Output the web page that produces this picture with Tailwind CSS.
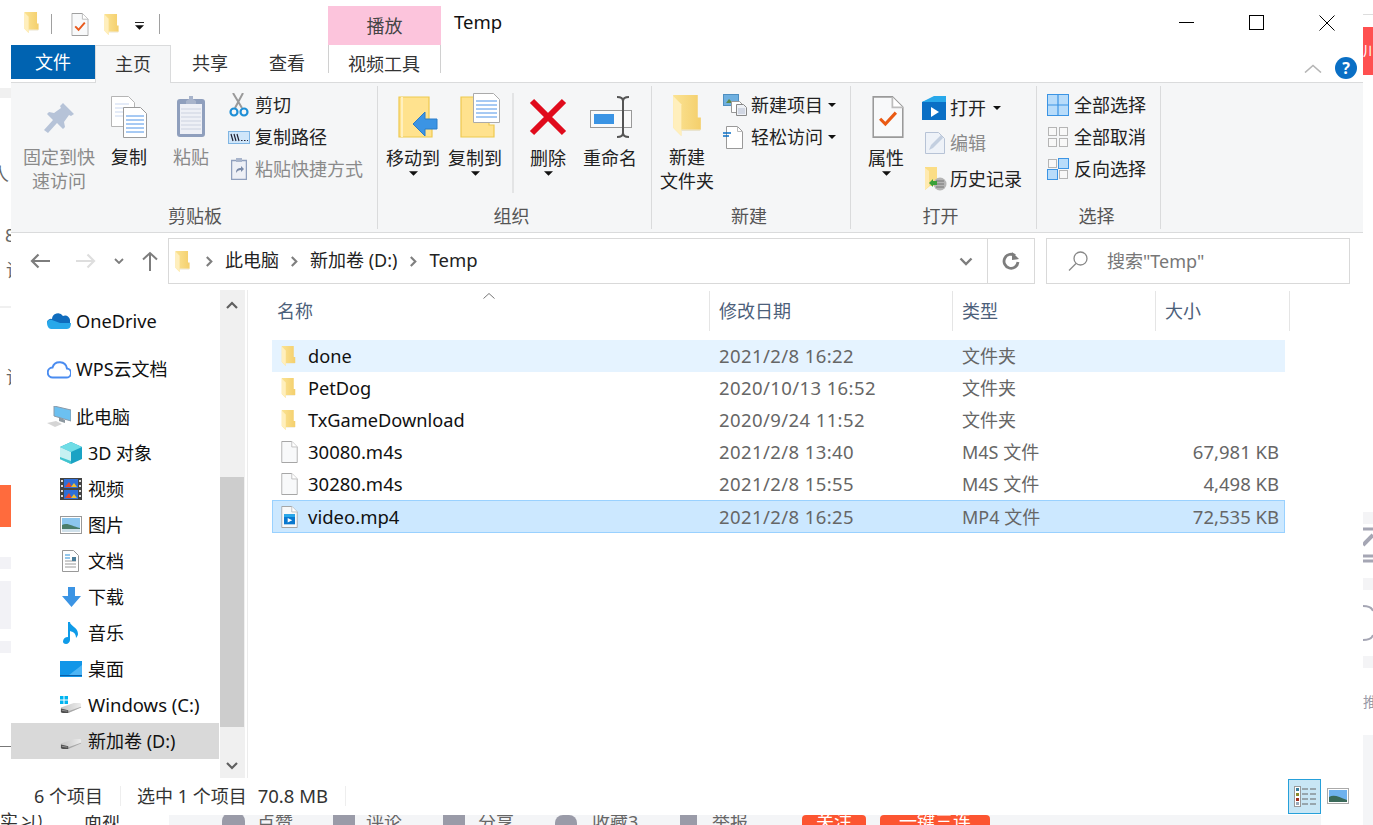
<!DOCTYPE html>
<html lang="zh-CN">
<head>
<meta charset="UTF-8">
<title>Temp</title>
<script src="https://cdn.jsdelivr.net/npm/@tailwindcss/browser@4"></script>
</head>
<body class="bg-white overflow-hidden font-['Noto_Sans','Noto_Sans_CJK_SC',sans-serif] text-[18px] leading-6 text-[#222]">

<svg class="absolute w-0 h-0">
  <defs>
    <linearGradient id="fold" x1="0" x2="1" y1="0" y2="0"><stop offset="0" stop-color="#fbe394"/><stop offset="1" stop-color="#f4cf6c"/></linearGradient>
    <linearGradient id="drv" x1="0" x2="1" y1="0" y2="0"><stop offset="0" stop-color="#c4c4c4"/><stop offset="1" stop-color="#ececec"/></linearGradient>
  </defs>
  <symbol id="folder" viewBox="0 0 27 40">
    <path d="M0 0h24v22h3v12H8v6L0 32z" fill="url(#fold)"/>
    <path d="M0 1l8 8v31l-8-8z" fill="#ffefbd"/>
    <path d="M8 34h19l-1 1H8z" fill="#e9e4d0"/>
  </symbol>
  <symbol id="page" viewBox="0 0 18 24">
    <path d="M.5.5h11l6 6v17H.5z" fill="#f8f9fa" stroke="#9a9a9a"/>
    <path d="M11.500.5v6h6" fill="#fff" stroke="#bdbdbd"/>
  </symbol>
  <symbol id="caret" viewBox="0 0 10 5"><path d="M0 0h10L5 5z" fill="#111"/></symbol>
  <symbol id="drive" viewBox="0 0 24 13">
    <path d="M1 6L15 1h7l1 1v4L9 12H3L1 11z" fill="url(#drv)"/>
    <path d="M9 12l14-6V5L9 10z" fill="#a8a8a8"/>
    <path d="M1 7l8 2v3H3l-2-1z" fill="#4f4f4f"/>
    <path d="M2 9l6 1" stroke="#aaa" stroke-width=".8"/>
  </symbol>
  <symbol id="chev" viewBox="0 0 10 14"><path d="M2 2l5 5-5 5" fill="none" stroke="#7f7f7f" stroke-width="2.400"/></symbol>
</svg>

<!-- page behind the window -->
<div class="absolute inset-0 overflow-hidden text-[#666]">
  <div class="absolute left-0 top-[88px] w-[11px] h-[10px] bg-[#f0f0f0]"></div>
  <div class="absolute left-[-9px] top-[162px]">人</div>
  <div class="absolute left-[5px] top-[223px]">8</div>
  <div class="absolute left-[6px] top-[258px]">论</div>
  <div class="absolute left-[6px] top-[365px]">论</div>
  <div class="absolute left-0 top-[306px] w-[11px] h-[2px] bg-[#f0f0f0]"></div>
  <div class="absolute left-0 top-[485px] w-[11px] h-[42px] bg-[#ff6b3d]"></div>
  <div class="absolute left-0 top-[557px] w-[11px] h-[12px] bg-[#f2f2f6]"></div>
  <div class="absolute left-0 top-[581px] w-[11px] h-[48px] bg-[#f2f2f6]"></div>
  <div class="absolute left-0 top-[641px] w-[11px] h-[12px] bg-[#f2f2f6]"></div>
  <div class="absolute left-0 top-[746px] w-[11px] h-px bg-[#777]"></div>
  <div class="absolute left-[1363px] top-[14px] w-[10px] h-px bg-[#ddd]"></div>
  <div class="absolute left-[1363px] top-[27px] w-[10px] h-[48px] bg-[#ff5050] overflow-hidden"><span class="absolute left-0 top-[12px] text-white text-[14px]">川</span></div>
  <div class="absolute left-[1363px] top-[512px] w-[10px] h-[12px] bg-[#f4f4f6]"></div>
  <svg class="absolute left-[1363px] top-[527px] w-[10px] h-[36px]" viewBox="0 0 10 36"><path d="M0 2h10M0 29h10M0 34h10" stroke="#a5a6b4" stroke-width="3"/><path d="M0 18L10 8" stroke="#a5a6b4" stroke-width="4"/></svg>
  <div class="absolute left-[1363px] top-[578px] w-[10px] h-[12px] bg-[#f4f4f6]"></div>
  <svg class="absolute left-[1363px] top-[605px] w-[10px] h-[36px]" viewBox="0 0 10 36"><path d="M0 1c5 0 9 2 10 5M0 35c5 0 9-2 10-5" fill="none" stroke="#a5a6b4" stroke-width="2"/></svg>
  <div class="absolute left-[1363px] top-[656px] w-[10px] h-[12px] bg-[#f4f4f6]"></div>
  <div class="absolute left-[1363px] top-[690px] text-[14px] text-[#9a9ba8]">推</div>
  <div class="absolute left-[1363px] top-[735px] w-[10px] h-[90px] bg-[#f4f5f7]"></div>

  <div class="absolute left-[169px] top-[815px] w-[1152px] h-[10px] bg-[#f4f5f7]"></div>
  <div class="absolute left-0 top-[809px] text-[#333]">实习）</div>
  <div class="absolute left-[84px] top-[809px] text-[#333]">面视</div>
  <div class="absolute left-[222px] top-[813px] w-[23px] h-[14px] rounded-t-lg bg-[#9a9ba8]"></div>
  <div class="absolute left-[257px] top-[810px]">点赞</div>
  <div class="absolute left-[333px] top-[815px] w-[22px] h-[12px] bg-[#9a9ba8]"></div>
  <div class="absolute left-[366px] top-[810px]">评论</div>
  <div class="absolute left-[443px] top-[815px] w-[22px] h-[12px] bg-[#9a9ba8]"></div>
  <div class="absolute left-[478px] top-[810px]">分享</div>
  <div class="absolute left-[555px] top-[815px] w-[22px] h-[12px] rounded-t-lg bg-[#9a9ba8]"></div>
  <div class="absolute left-[592px] top-[810px]">收藏3</div>
  <div class="absolute left-[680px] top-[815px] w-[17px] h-[12px] bg-[#9a9ba8]"></div>
  <div class="absolute left-[712px] top-[810px]">举报</div>
  <div class="absolute left-[802px] top-[815px] w-[64px] h-[12px] rounded-t bg-[#fc5531] text-white text-center overflow-hidden"><span class="relative top-[-6px]">关注</span></div>
  <div class="absolute left-[880px] top-[815px] w-[110px] h-[12px] rounded-t bg-[#fc5531] text-white text-center overflow-hidden"><span class="relative top-[-6px]">一键三连</span></div>
</div>

<!-- explorer window -->
<div class="absolute left-[11px] top-0 w-[1352px] h-[815px] bg-white flex flex-col">

  <!-- title bar -->
  <div class="h-[45px] flex items-start shrink-0 relative">
    <svg class="w-[15px] h-[21px] ml-[13px] mt-[12px]"><use href="#folder"/></svg>
    <div class="w-px h-[20px] bg-[#a0a0a0] ml-[12px] mt-[14px]"></div>
    <svg class="w-[18px] h-[23px] ml-[19px] mt-[13px]" viewBox="0 0 18 24"><use href="#page"/><path d="M4 14l3.500 3.500L14 10" fill="none" stroke="#e8591c" stroke-width="2"/></svg>
    <svg class="w-[15px] h-[21px] ml-[15px] mt-[14px]"><use href="#folder"/></svg>
    <div class="ml-[15px] mt-[22px] w-[11px] flex flex-col items-center">
      <div class="w-[9px] h-px bg-[#222]"></div>
      <svg class="w-[9px] h-[5px] mt-[2px]"><use href="#caret"/></svg>
    </div>
    <div class="w-px h-[20px] bg-[#a0a0a0] ml-[14px] mt-[14px]"></div>
    <div class="ml-[168px] mt-[6px] w-[113px] h-[39px] bg-[#fcc4dc] text-center leading-[40px] text-[#444]">播放</div>
    <div class="ml-[13px] mt-[10px] text-[18.5px] text-[#111]">Temp</div>
    <div class="ml-auto flex">
      <div class="w-[70px] h-[45px] flex items-center justify-center pb-[1px]"><div class="w-[15px] h-px bg-black"></div></div>
      <div class="w-[70px] h-[45px] flex items-center justify-center"><div class="w-[15px] h-[15px] border border-black"></div></div>
      <div class="w-[71px] h-[45px] flex items-center justify-center mr-[1px]">
        <svg class="w-[16px] h-[16px]" viewBox="0 0 16 16"><path d="M.5.500l15 15M15.500.500l-15 15" stroke="#000" fill="none"/></svg>
      </div>
    </div>
  </div>

  <!-- tabs -->
  <div class="h-[38px] flex items-start shrink-0 border-b border-[#dadbdc] relative">
    <div class="w-[84px] h-[34px] bg-[#0063b1] text-white text-center leading-[34px]">文件</div>
    <div class="w-[76px] h-[38px] border border-b-0 border-[#dadbdc] text-center leading-[36px] text-[#333] bg-[#f5f6f7]">主页</div>
    <div class="ml-[21px] w-[36px] leading-[36px] text-[#333]">共享</div>
    <div class="ml-[41px] w-[36px] leading-[36px] text-[#333]">查看</div>
    <div class="ml-[23px] w-[113px] h-[28px] border-x border-[#d0d0d0] text-center leading-[38px] text-[#333] pr-[1px]">视频工具</div>
    <div class="ml-auto flex items-center mt-[12px] mr-[6px]">
      <svg class="w-[18px] h-[9px] mr-[13px]" viewBox="0 0 18 9"><path d="M1 8.500l8-7 8 7" fill="none" stroke="#b5b5b5" stroke-width="1.600"/></svg>
      <div class="w-[22px] h-[22px] rounded-full bg-[#0a6fc5] text-white text-[16px] leading-[22px] text-center font-bold">?</div>
    </div>
  </div>

  <!-- ribbon -->
  <div class="h-[150px] shrink-0 bg-[#f5f6f7] border-b border-[#dadbdc] flex text-[#333]">

    <!-- 剪贴板 -->
    <div class="w-[367px] border-r border-[#dadbdc] flex flex-col my-[3px]">
      <div class="flex flex-1 min-h-0">
        <div class="ml-[12px] w-[72px] text-center text-[#8a8a8a]">
          <svg class="w-[32px] h-[32px] mx-auto mt-[16px]" viewBox="0 0 32 32"><path d="M20 1l11 11-3 2-2-1-5 7 1 5-2 2-6-6-9 10-4-3 9-10-6-6 2-2 5 1 7-5-1-2z" fill="#b6c3d8"/></svg>
          <div class="mt-[11px] leading-[24px]">固定到快<br>速访问</div>
        </div>
        <div class="ml-[12px] w-[44px] text-center">
          <svg class="w-[36px] h-[42px] mx-auto mt-[10px]" viewBox="0 0 36 42">
            <path d="M.5.500h17l6 6v24H.5z" fill="#fff" stroke="#b5b5b5"/>
            <path d="M4 8h14M4 12h14M4 16h14M4 20h14" stroke="#c9d7f0"/>
            <path d="M12.500 11.500h17l6 6v24h-23z" fill="#fff" stroke="#9a9a9a"/>
            <path d="M15 20h18M15 24h18M15 28h18M15 32h18M15 36h18" stroke="#4f94e8"/>
          </svg>
          <div class="mt-[7px] text-[#222]">复制</div>
        </div>
        <div class="ml-[18px] w-[44px] text-center text-[#8a8a8a]">
          <svg class="w-[30px] h-[44px] mx-auto mt-[8px]" viewBox="0 0 30 44">
            <rect x="1" y="5" width="28" height="38" rx="3" fill="#8f9fbd"/>
            <path d="M4 10h22v30H4z" fill="#eef0f6"/>
            <path d="M5 15h20M5 19h20M5 23h20M5 27h20M5 31h20M5 35h20" stroke="#ccd2e0"/>
            <path d="M10 7l3-2V2h4v3l3 2v3H10z" fill="#a8b4cb"/>
          </svg>
          <div class="mt-[7px]">粘贴</div>
        </div>
        <div class="ml-[16px] mt-[3px] flex flex-col">
          <div class="h-[32px] flex items-center">
            <svg class="w-[20px] h-[24px]" viewBox="0 0 20 24"><path d="M4 0l9 15M14 0L6 15" stroke="#9a9a9a" stroke-width="2"/><circle cx="5" cy="19" r="3.500" fill="none" stroke="#1f8fd6" stroke-width="2.200"/><circle cx="15" cy="19" r="3.500" fill="none" stroke="#1f8fd6" stroke-width="2.200"/></svg>
            <span class="ml-[6px] text-[#222]">剪切</span>
          </div>
          <div class="h-[32px] flex items-center">
            <svg class="w-[22px] h-[13px] -ml-[1px]" viewBox="0 0 22 13"><rect x=".5" y=".5" width="21" height="12" fill="#cfe6fa" stroke="#7fb5e3"/><path d="M3 3l2 7M6 3l2 7M9 3l2 7" stroke="#223" stroke-width="1.200"/><path d="M13 9.500h1.500M16 9.500h1.500M19 9.500h1" stroke="#223"/></svg>
            <span class="ml-[5px] text-[#222]">复制路径</span>
          </div>
          <div class="h-[32px] flex items-center text-[#8a8a8a]">
            <svg class="w-[16px] h-[22px] ml-[2px]" viewBox="0 0 16 22"><rect x=".5" y="2.500" width="15" height="19" fill="#eef0f6" stroke="#8f9fbd" stroke-width="1.500"/><path d="M5 0h6v4H5z" fill="#a8b4cb"/><path d="M5 15c0-4 2-5 5-5V8l3 3-3 3v-2c-2 0-4 1-5 3z" fill="#7a8aa8"/></svg>
            <span class="ml-[8px]">粘贴快捷方式</span>
          </div>
        </div>
      </div>
      <div class="h-[26px] shrink-0 text-center text-[#555] leading-[26px] pl-[2px]">剪贴板</div>
    </div>

    <!-- 组织 -->
    <div class="w-[274px] border-r border-[#dadbdc] flex flex-col my-[3px]">
      <div class="flex flex-1 min-h-0">
        <div class="ml-[8px] w-[54px] text-center text-[#222]">
          <svg class="w-[40px] h-[42px] mx-auto mt-[10px] translate-x-[5px]" viewBox="0 0 40 42">
            <path d="M1 1h30v30h3v10H1z" fill="#ffe28e" stroke="#eec94f" stroke-width="1.200"/>
            <path d="M4 1v40" stroke="#fff0bf" stroke-width="2"/>
            <path d="M15 28L27 16v7h12v10H27v7z" fill="#3b94e4" stroke="#2a7cc8"/>
          </svg>
          <div class="mt-[8px] leading-[24px]">移动到</div>
          <svg class="w-[9px] h-[5px] mx-auto mt-[1px]"><use href="#caret"/></svg>
        </div>
        <div class="ml-[8px] w-[54px] text-center text-[#222]">
          <svg class="w-[40px] h-[45px] mx-auto mt-[7px] translate-x-[5px]" viewBox="0 0 40 45">
            <path d="M1 4h28v28h5v12H1z" fill="#ffe28e" stroke="#eec94f" stroke-width="1.200"/>
            <path d="M13.500.500h20l6 6v23h-26z" fill="#fff" stroke="#aaa"/>
            <path d="M16 8h21M16 12h21M16 16h21M16 20h21M16 24h21" stroke="#4f94e8"/>
          </svg>
          <div class="mt-[8px] leading-[24px]">复制到</div>
          <svg class="w-[9px] h-[5px] mx-auto mt-[1px]"><use href="#caret"/></svg>
        </div>
        <div class="ml-[10px] mt-[7px] w-[2px] h-[100px] bg-[#e3e4e5]"></div>
        <div class="ml-[10px] w-[48px] text-center text-[#222]">
          <svg class="w-[38px] h-[38px] mx-auto mt-[12px]" viewBox="0 0 38 38"><path d="M3 3l32 32M35 3L3 35" stroke="#e00b1c" stroke-width="6"/></svg>
          <div class="mt-[10px] leading-[24px]">删除</div>
          <svg class="w-[9px] h-[5px] mx-auto mt-[1px]"><use href="#caret"/></svg>
        </div>
        <div class="ml-[11px] w-[54px] text-center text-[#222]">
          <svg class="w-[44px] h-[44px] mx-auto mt-[9px] translate-x-[2px]" viewBox="0 0 44 44">
            <rect x=".5" y="15.500" width="41" height="17" fill="#fafafa" stroke="#999"/>
            <rect x="4" y="19" width="20" height="10" fill="#3b94e4"/>
            <path d="M27 2c4 0 6 1 6 4v32c0 3-2 4-6 4M39 2c-4 0-6 1-6 4v32c0 3 2 4 6 4" fill="none" stroke="#555" stroke-width="2"/>
          </svg>
          <div class="mt-[7px] leading-[24px]">重命名</div>
        </div>
      </div>
      <div class="h-[26px] shrink-0 text-center text-[#555] leading-[26px] pr-[6px]">组织</div>
    </div>

    <!-- 新建 -->
    <div class="w-[199px] border-r border-[#dadbdc] flex flex-col my-[3px]">
      <div class="flex flex-1 min-h-0">
        <div class="ml-[8px] w-[54px] text-center text-[#222]">
          <svg class="w-[28px] h-[41px] mx-auto mt-[9px]"><use href="#folder"/></svg>
          <div class="mt-[9px] leading-[24px]">新建<br>文件夹</div>
        </div>
        <div class="ml-[9px] mt-[3px] flex flex-col">
          <div class="h-[32px] flex items-center">
            <svg class="w-[24px] h-[22px]" viewBox="0 0 24 22"><rect x=".5" y=".5" width="15" height="11" fill="#6fb0e0" stroke="#4f8fc0"/><path d="M3 9l3-4 4 4z" fill="#5b8a4a"/><path d="M8.500 7.500h8l3 3v8h-11z" fill="#fff" stroke="#999"/><path d="M13.500 10.500h7l3 3v8h-10z" fill="#eef1f6" stroke="#888"/><path d="M15 15h7M15 17h7M15 19h7" stroke="#b5bdd0"/></svg>
            <span class="ml-[4px] text-[#222]">新建项目</span>
            <svg class="w-[8px] h-[4px] ml-[5px]"><use href="#caret"/></svg>
          </div>
          <div class="h-[32px] flex items-center">
            <svg class="w-[20px] h-[23px]" viewBox="0 0 20 23"><path d="M3.500.500h11l5 5v17h-16z" fill="#fff" stroke="#999"/><path d="M14.500.500v5h5" fill="none" stroke="#bbb"/><path d="M0 7h8M0 10h6" stroke="#0a6fc5" stroke-width="1.400"/></svg>
            <span class="ml-[8px] text-[#222]">轻松访问</span>
            <svg class="w-[8px] h-[4px] ml-[5px]"><use href="#caret"/></svg>
          </div>
        </div>
      </div>
      <div class="h-[26px] shrink-0 text-center text-[#555] leading-[26px] pr-[4px]">新建</div>
    </div>

    <!-- 打开 -->
    <div class="w-[186px] border-r border-[#dadbdc] flex flex-col my-[3px]">
      <div class="flex flex-1 min-h-0">
        <div class="ml-[8px] w-[54px] text-center text-[#222]">
          <svg class="w-[32px] h-[42px] mx-auto mt-[10px] translate-x-[2px]" viewBox="0 0 18 24"><use href="#page"/><path d="M4.500 13l3 3 6-6.500" fill="none" stroke="#ea5a14" stroke-width="1.800"/></svg>
          <div class="mt-[8px] leading-[24px]">属性</div>
          <svg class="w-[9px] h-[5px] mx-auto mt-[1px]"><use href="#caret"/></svg>
        </div>
        <div class="ml-[9px] mt-[4px] flex flex-col">
          <div class="h-[35px] flex items-center">
            <svg class="w-[24px] h-[24px]" viewBox="0 0 24 24"><path d="M0 6l20-6h4v24H0z" fill="#0a6fc5"/><path d="M0 6h24V0H12z" fill="#28a8ea"/><path d="M9 11l8 5-8 5z" fill="#fff"/></svg>
            <span class="ml-[4px] text-[#222]">打开</span>
            <svg class="w-[8px] h-[4px] ml-[7px]"><use href="#caret"/></svg>
          </div>
          <div class="h-[36px] flex items-center text-[#8a8a8a]">
            <svg class="w-[21px] h-[22px] ml-[3px]" viewBox="0 0 21 22"><path d="M.5.500h13l6 6v15H.500z" fill="#eef2f8" stroke="#b7c3d6"/><path d="M4 18l2-5L16 3l2 3L8 16z" fill="#c3cfe0"/></svg>
            <span class="ml-[4px]">编辑</span>
          </div>
          <div class="h-[35px] flex items-center">
            <svg class="w-[22px] h-[24px] ml-[3px]" viewBox="0 0 22 24"><path d="M0 0h12v11h0v8H5l-5 4z" fill="#fbdd85"/><path d="M0 1l4 3v15l-4 4z" fill="#ffeab0"/><circle cx="15" cy="17" r="6.500" fill="#b5b5b5"/><path d="M11 14h8M11 17h8M11 20h8" stroke="#777"/><path d="M4 16l4-4v2h4v4H8v2z" fill="#3aa13a"/></svg>
            <span class="ml-[3px] text-[#222]">历史记录</span>
          </div>
        </div>
      </div>
      <div class="h-[26px] shrink-0 text-center text-[#555] leading-[26px] pr-[6px]">打开</div>
    </div>

    <!-- 选择 -->
    <div class="w-[124px] border-r border-[#dadbdc] flex flex-col my-[3px]">
      <div class="flex flex-1 min-h-0">
        <div class="ml-[10px] mt-[3px] flex flex-col text-[#222]">
          <div class="h-[32px] flex items-center">
            <svg class="w-[22px] h-[22px]" viewBox="0 0 22 22"><rect x=".5" y=".5" width="21" height="21" fill="#b8dcfa" stroke="#3b94e4"/><path d="M11 0v22M0 11h22" stroke="#3b94e4" stroke-width="1.200"/></svg>
            <span class="ml-[5px]">全部选择</span>
          </div>
          <div class="h-[32px] flex items-center">
            <svg class="w-[22px] h-[22px]" viewBox="0 0 22 22" fill="#f8f8f8" stroke="#b5b5b5"><rect x="1.500" y="1.500" width="8" height="8"/><rect x="12.500" y="1.500" width="8" height="8"/><rect x="1.500" y="12.500" width="8" height="8"/><rect x="12.500" y="12.500" width="8" height="8"/></svg>
            <span class="ml-[5px]">全部取消</span>
          </div>
          <div class="h-[32px] flex items-center">
            <svg class="w-[22px] h-[22px]" viewBox="0 0 22 22"><g fill="#f8f8f8" stroke="#b5b5b5"><rect x="1.500" y="1.500" width="8" height="8"/><rect x="12.500" y="12.500" width="8" height="8"/></g><g fill="#b8dcfa" stroke="#3b94e4"><rect x="11.500" y=".5" width="10" height="10"/><rect x=".5" y="11.500" width="10" height="10"/></g></svg>
            <span class="ml-[5px]">反向选择</span>
          </div>
        </div>
      </div>
      <div class="h-[26px] shrink-0 text-center text-[#555] leading-[26px] pr-[4px]">选择</div>
    </div>
  </div>

  <!-- address row -->
  <div class="h-[57px] shrink-0 flex items-start relative">
    <svg class="w-[20px] h-[16px] ml-[19px] mt-[20px]" viewBox="0 0 20 16"><path d="M20 8H2M8.500 1.500L2 8l6.500 6.500" fill="none" stroke="#7d7d7d" stroke-width="2.200"/></svg>
    <svg class="w-[20px] h-[16px] ml-[26px] mt-[20px]" viewBox="0 0 20 16"><path d="M0 8h18M11.500 1.500L18 8l-6.500 6.500" fill="none" stroke="#dedede" stroke-width="2.200"/></svg>
    <svg class="w-[10px] h-[6px] ml-[18px] mt-[25px]" viewBox="0 0 10 6"><path d="M1 1l4 4 4-4" fill="none" stroke="#7d7d7d" stroke-width="1.800"/></svg>
    <svg class="w-[16px] h-[20px] ml-[18px] mt-[18px]" viewBox="0 0 16 20"><path d="M8 20V2M1 8.500L8 2l7 6.500" fill="none" stroke="#7d7d7d" stroke-width="2"/></svg>
    <div class="ml-[10px] mt-[5px] w-[867px] h-[46px] border border-[#d9d9d9] flex items-center">
      <svg class="w-[15px] h-[21px] ml-[6px]"><use href="#folder"/></svg>
      <svg class="w-[9px] h-[13px] ml-[15px]"><use href="#chev"/></svg>
      <span class="ml-[11px] text-[#222] pb-[2px]">此电脑</span>
      <svg class="w-[9px] h-[13px] ml-[11px]"><use href="#chev"/></svg>
      <span class="ml-[11px] text-[#222] pb-[2px]">新加卷 (D:)</span>
      <svg class="w-[9px] h-[13px] ml-[12px]"><use href="#chev"/></svg>
      <span class="ml-[11px] text-[18.5px] text-[#222] pb-[2px]">Temp</span>
      <svg class="w-[14px] h-[9px] ml-auto mr-[14px]" viewBox="0 0 14 9"><path d="M1.500 1.500L7 7l5.500-5.500" fill="none" stroke="#7d7d7d" stroke-width="2.400"/></svg>
      <div class="w-[47px] h-full border-l border-[#d9d9d9] flex items-center justify-center">
        <svg class="w-[18px] h-[18px]" viewBox="0 0 18 18"><path d="M13 3.500A7 7 0 1 0 16 10" fill="none" stroke="#7d7d7d" stroke-width="2.800"/><path d="M10 0v8l7-1z" fill="#7d7d7d"/></svg>
      </div>
    </div>
    <div class="ml-[11px] mt-[5px] w-[304px] h-[46px] border border-[#d9d9d9] flex items-center text-[#777]">
      <svg class="w-[20px] h-[20px] ml-[21px]" viewBox="0 0 20 20"><circle cx="12.500" cy="7.500" r="6.500" fill="none" stroke="#888" stroke-width="1.300"/><path d="M8 12.500L1 19.500" stroke="#888" stroke-width="1.300"/></svg>
      <span class="ml-[19px] pb-[1px]">搜索"Temp"</span>
    </div>
  </div>

  <!-- nav + list -->
  <div class="h-[488px] shrink-0 flex">
    <div class="w-[208px] shrink-0 mr-px text-[#111]">
      <div class="h-[13px]"></div>
      <div class="h-[36px] flex items-center pl-[36px]">
        <svg class="w-[24px] h-[16px]" viewBox="0 0 24 16"><path d="M5 6a6 6 0 0 1 11-3 5 5 0 0 1 7 5v2H0V9a4 4 0 0 1 5-3z" fill="#0f6cbd"/><path d="M0 10c0-3 3-4 5-3l8 3 11 0c0 3-1 6-4 6H4c-2 0-4-3-4-6z" fill="#28a8ea"/></svg>
        <span class="ml-[5px] text-[18.2px]">OneDrive</span>
      </div>
      <div class="h-[12px]"></div>
      <div class="h-[36px] flex items-center pl-[36px]">
        <svg class="w-[24px] h-[19px]" viewBox="0 0 24 19"><path d="M6 17.500h13a4.500 4.500 0 0 0 1-9 7.500 7.500 0 0 0-14.500-1A5 5 0 0 0 6 17.500z" fill="none" stroke="#4a8cf0" stroke-width="2"/></svg>
        <span class="ml-[5px]">WPS云文档</span>
      </div>
      <div class="h-[12px]"></div>
      <div class="h-[36px] flex items-center pl-[36px]">
        <svg class="w-[24px] h-[22px]" viewBox="0 0 24 22"><path d="M7 0l17 4v11L7 10z" fill="#6cc0f0" stroke="#8a9aa8"/><path d="M12 11l6 3v3l-6-2z" fill="#8d98a0"/><path d="M0 17l9-2 6 3-7 3z" fill="#d5d5d5"/></svg>
        <span class="ml-[5px]">此电脑</span>
      </div>
      <div class="h-[36px] flex items-center pl-[49px]">
        <svg class="w-[22px] h-[22px]" viewBox="0 0 22 22"><path d="M11 0l11 5v12l-11 5L0 17V5z" fill="#1aa3c4"/><path d="M11 0l11 5-11 5L0 5z" fill="#6fdde6"/><path d="M0 5l11 5v12L0 17z" fill="#c6f1f2"/><path d="M0 15l11 4v3L0 17z" fill="#3fc4cf"/></svg>
        <span class="ml-[6px]">3D 对象</span>
      </div>
      <div class="h-[36px] flex items-center pl-[49px]">
        <svg class="w-[22px] h-[22px]" viewBox="0 0 22 22"><rect width="22" height="22" fill="#444"/><path d="M1 2h2v2H1zM1 7h2v2H1zM1 12h2v2H1zM1 17h2v2H1zM19 2h2v2h-2zM19 7h2v2h-2zM19 12h2v2h-2zM19 17h2v2h-2z" fill="#ddd"/><rect x="4" y="1" width="14" height="9" fill="#2f6fd8"/><rect x="4" y="12" width="14" height="9" fill="#2f6fd8"/><path d="M5 9l4-5 3 5zM5 20l4-5 3 5z" fill="#e8452c"/><path d="M11 9l3-4 3 4zM11 20l3-4 3 4z" fill="#f0c030"/></svg>
        <span class="ml-[6px]">视频</span>
      </div>
      <div class="h-[36px] flex items-center pl-[49px]">
        <svg class="w-[22px] h-[18px]" viewBox="0 0 22 18"><rect x=".5" y=".5" width="21" height="17" fill="#fff" stroke="#999"/><rect x="2" y="2" width="18" height="14" fill="#8cc6ee"/><path d="M2 9c5-3 10 1 18 3v4H2z" fill="#4a7d6a"/><path d="M2 13h18v3H2z" fill="#cfe0ea"/></svg>
        <span class="ml-[6px]">图片</span>
      </div>
      <div class="h-[36px] flex items-center pl-[51px]">
        <svg class="w-[17px] h-[22px]" viewBox="0 0 17 22"><path d="M.5.500h11l5 5v16H.500z" fill="#fff" stroke="#999"/><path d="M3 5h5M3 8h5" stroke="#2a8fd8" stroke-width="1.200"/><path d="M3 11h11M3 14h11M3 17h11" stroke="#9a9a9a"/><rect x="10" y="7" width="4" height="4" fill="#4a7d9a"/></svg>
        <span class="ml-[9px]">文档</span>
      </div>
      <div class="h-[36px] flex items-center pl-[51px]">
        <svg class="w-[19px] h-[20px]" viewBox="0 0 19 20"><path d="M6 0h7v9h6l-9.500 11L0 9h6z" fill="#3b94e4"/></svg>
        <span class="ml-[7px]">下载</span>
      </div>
      <div class="h-[36px] flex items-center pl-[52px]">
        <svg class="w-[17px] h-[22px]" viewBox="0 0 17 22"><path d="M5 0h2c0 4 8 5 8 12 0 1-1 3-2 4 0-5-3-6-6-7v9c0 2-2 4-4 4s-3-1-3-2.500C0 17 2 15 5 15z" fill="#0f9be8"/></svg>
        <span class="ml-[8px]">音乐</span>
      </div>
      <div class="h-[36px] flex items-center pl-[49px]">
        <svg class="w-[22px] h-[16px]" viewBox="0 0 22 16"><rect width="22" height="16" fill="#1296e8"/><path d="M9 14L22 4v10z" fill="#4db5f5"/><path d="M0 14.500h22" stroke="#0a5fa8"/></svg>
        <span class="ml-[6px]">桌面</span>
      </div>
      <div class="h-[36px] flex items-center pl-[49px]">
        <div class="relative w-[22px] h-[18px]">
          <svg class="absolute left-0 top-[6px] w-[22px] h-[12px]"><use href="#drive"/></svg>
          <svg class="absolute left-0 top-0 w-[8px] h-[8px]" viewBox="0 0 8 8"><path d="M0 0h3.500v3.500H0zM4.500 0H8v3.500H4.500zM0 4.500h3.500V8H0zM4.500 4.500H8V8H4.500z" fill="#00b4f0"/></svg>
        </div>
        <span class="ml-[6px] text-[18.5px]">Windows (C:)</span>
      </div>
      <div class="h-[36px] flex items-center pl-[49px] bg-[#d9d9d9]">
        <svg class="w-[22px] h-[12px] mt-[6px]"><use href="#drive"/></svg>
        <span class="ml-[6px]">新加卷 (D:)</span>
      </div>
    </div>

    <div class="w-[25px] shrink-0 bg-[#f0f0f0] flex flex-col items-stretch pr-px">
      <div class="h-[187px] flex items-start justify-center pt-[11px]">
        <svg class="w-[12px] h-[8px]" viewBox="0 0 12 8"><path d="M1 7l5-5 5 5" fill="none" stroke="#606060" stroke-width="2.200"/></svg>
      </div>
      <div class="h-[250px] bg-[#cdcdcd]"></div>
      <div class="flex-1 flex items-end justify-center pb-[8px]">
        <svg class="w-[12px] h-[8px]" viewBox="0 0 12 8"><path d="M1 1l5 5 5-5" fill="none" stroke="#606060" stroke-width="2.200"/></svg>
      </div>
    </div>

    <div class="w-[3px] shrink-0 border-r border-[#ececec]"></div>

    <div class="flex-1 relative pl-[24px]">
      <svg class="absolute left-[235px] top-[3px] w-[12px] h-[6px]" viewBox="0 0 12 6"><path d="M.5 5.500L6 .5l5.500 5" fill="none" stroke="#777"/></svg>
      <div class="grid grid-cols-[437px_243px_203px_135px] h-[50px] pt-px text-[#4c607a]">
        <div class="h-[40px] pl-[5px] flex items-center">名称</div>
        <div class="h-[40px] pl-[9px] flex items-center border-l border-[#e5e5e5]">修改日期</div>
        <div class="h-[40px] pl-[9px] flex items-center border-l border-[#e5e5e5]">类型</div>
        <div class="h-[40px] pl-[9px] flex items-center border-x border-[#e5e5e5]">大小</div>
      </div>

      <div class="w-[1013px] text-[18.5px] text-[#666]">
        <div class="h-[32px] grid grid-cols-[437px_243px_203px_130px] items-center bg-[#e5f3ff]">
          <div class="flex items-center pl-[9px] text-[#111] text-[18.2px]"><svg class="w-[15px] h-[20px]"><use href="#folder"/></svg><span class="ml-[12px]">done</span></div>
          <div class="pl-[10px] tracking-[0.4px]">2021/2/8 16:22</div>
          <div class="pl-[10px] text-[18px]">文件夹</div>
          <div class="pr-[6px] text-right"></div>
        </div>
        <div class="h-[32px] grid grid-cols-[437px_243px_203px_130px] items-center">
          <div class="flex items-center pl-[9px] text-[#111] text-[18.2px]"><svg class="w-[15px] h-[20px]"><use href="#folder"/></svg><span class="ml-[12px]">PetDog</span></div>
          <div class="pl-[10px] tracking-[0.4px]">2020/10/13 16:52</div>
          <div class="pl-[10px] text-[18px]">文件夹</div>
          <div class="pr-[6px] text-right"></div>
        </div>
        <div class="h-[32px] grid grid-cols-[437px_243px_203px_130px] items-center">
          <div class="flex items-center pl-[9px] text-[#111] text-[18.2px]"><svg class="w-[15px] h-[20px]"><use href="#folder"/></svg><span class="ml-[12px]">TxGameDownload</span></div>
          <div class="pl-[10px] tracking-[0.4px]">2020/9/24 11:52</div>
          <div class="pl-[10px] text-[18px]">文件夹</div>
          <div class="pr-[6px] text-right"></div>
        </div>
        <div class="h-[32px] grid grid-cols-[437px_243px_203px_130px] items-center">
          <div class="flex items-center pl-[9px] text-[#111]"><svg class="w-[17px] h-[22px]" viewBox="0 0 18 24"><use href="#page"/></svg><span class="ml-[10px]">30080.m4s</span></div>
          <div class="pl-[10px] tracking-[0.4px]">2021/2/8 13:40</div>
          <div class="pl-[10px] text-[18px]">M4S 文件</div>
          <div class="pr-[6px] text-right">67,981 KB</div>
        </div>
        <div class="h-[32px] grid grid-cols-[437px_243px_203px_130px] items-center">
          <div class="flex items-center pl-[9px] text-[#111]"><svg class="w-[17px] h-[22px]" viewBox="0 0 18 24"><use href="#page"/></svg><span class="ml-[10px]">30280.m4s</span></div>
          <div class="pl-[10px] tracking-[0.4px]">2021/2/8 15:55</div>
          <div class="pl-[10px] text-[18px]">M4S 文件</div>
          <div class="pr-[6px] text-right">4,498 KB</div>
        </div>
        <div class="h-[33px] grid grid-cols-[436px_243px_203px_129px] items-center bg-[#cce8ff] border border-[#99d1ff]">
          <div class="flex items-center pl-[8px] text-[#111]">
            <svg class="w-[17px] h-[22px]" viewBox="0 0 18 24"><use href="#page"/><rect x="3" y="9" width="12" height="11" fill="#0a78cf"/><path d="M3 9h12v3H3z" fill="#28a8ea"/><path d="M7 13l5 2.500L7 18z" fill="#fff"/></svg>
            <span class="ml-[10px]">video.mp4</span>
          </div>
          <div class="pl-[10px] tracking-[0.4px]">2021/2/8 16:25</div>
          <div class="pl-[10px] text-[18px]">MP4 文件</div>
          <div class="pr-[5px] text-right">72,535 KB</div>
        </div>
      </div>
    </div>
  </div>

  <!-- status bar -->
  <div class="h-[37px] shrink-0 flex items-center text-[#333] relative pb-[1px]">
    <span class="ml-[23px]">6 个项目</span>
    <div class="w-px h-[20px] bg-[#eee] ml-[17px]"></div>
    <span class="ml-[16px]">选中 1 个项目</span>
    <span class="ml-[11px] text-[18.5px]">70.8 MB</span>
    <div class="w-px h-[20px] bg-[#eee] ml-[17px]"></div>
    <div class="ml-auto mr-[14px] flex items-center">
      <div class="w-[33px] h-[35px] bg-[#c8e6f5] border border-[#26a0da] flex items-center justify-center">
        <svg class="w-[22px] h-[21px]" viewBox="0 0 22 21">
          <rect x=".5" y=".5" width="6" height="20" fill="#fff" stroke="#999"/>
          <path d="M2 2h3v3H2z" fill="#3a7d9a"/><path d="M2 7h3v3H2z" fill="#8a8a2a"/><path d="M2 12h3v3H2z" fill="#a03020"/><path d="M2 16h3v3H2z" fill="#9ab"/>
          <path d="M8 3h6M16 3h6M8 8h6M16 8h6M8 13h6M16 13h6M8 18h6M16 18h6" stroke="#666"/>
        </svg>
      </div>
      <svg class="w-[22px] h-[16px] ml-[6px]" viewBox="0 0 22 16"><rect x=".5" y=".5" width="21" height="15" fill="#fff" stroke="#aaa"/><rect x="2" y="2" width="18" height="12" fill="#6fb2ee"/><path d="M2 9c5-3 10 0 18 3v2H2z" fill="#3a6a5a"/></svg>
    </div>
  </div>
</div>
</body>
</html>
